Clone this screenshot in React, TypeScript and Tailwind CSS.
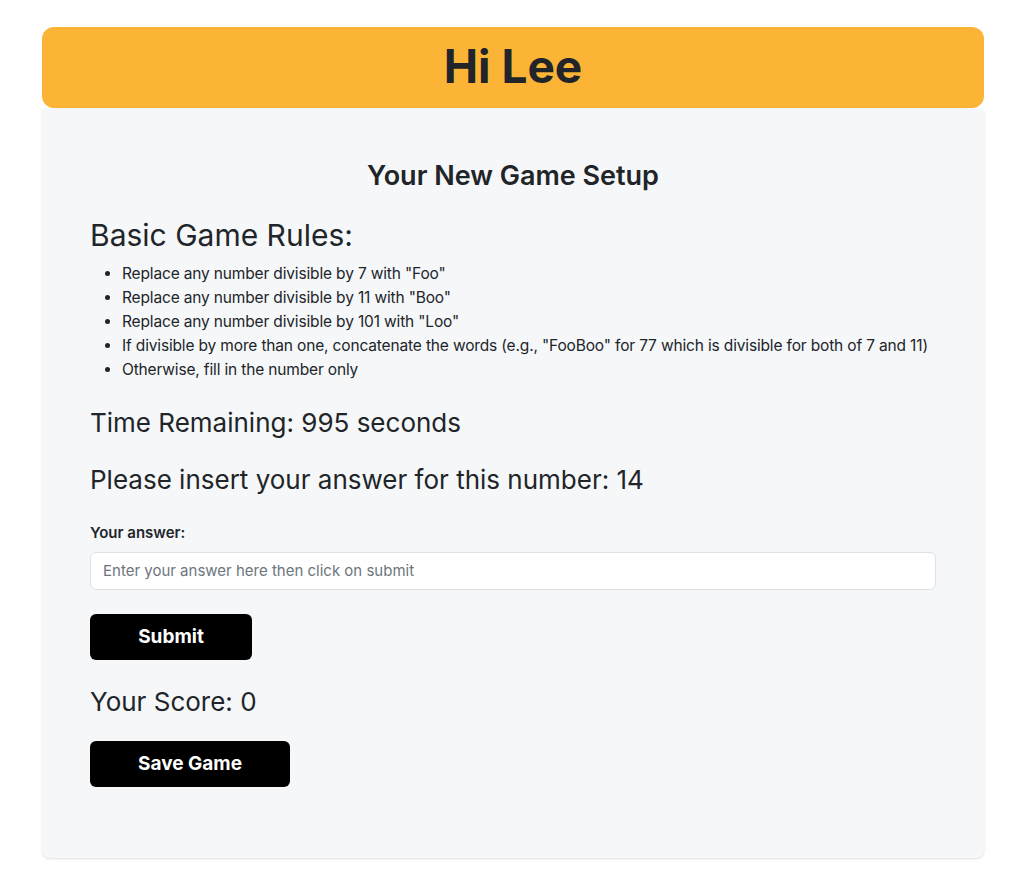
import React, { useState } from "react";

const rules = [
  'Replace any number divisible by 7 with "Foo"',
  'Replace any number divisible by 11 with "Boo"',
  'Replace any number divisible by 101 with "Loo"',
  'If divisible by more than one, concatenate the words (e.g., "FooBoo" for 77 which is divisible for both of 7 and 11)',
  "Otherwise, fill in the number only",
];

const App = () => {
  const [answer, setAnswer] = useState("");

  return (
    <div
      className="min-h-screen bg-white pl-[42px] pr-[37px] pt-[27px] pb-5 text-[#212529]"
      style={{ fontFamily: "Inter, 'Noto Sans', sans-serif" }}
    >
      <div className="flex h-[81px] items-center justify-center rounded-xl bg-[#fbb436] pb-1">
        <h1 className="text-[46px] font-bold leading-none">Hi Lee</h1>
      </div>
      <div className="rounded-b-lg rounded-t-sm bg-[#f6f7f9] px-12 pt-[52px] pb-[71px] shadow-sm">
        <h2 className="text-center text-[27px] font-semibold leading-[1.2]">Your New Game Setup</h2>
        <h3 className="mt-[25px] text-[30px] leading-[1.2]">Basic Game Rules:</h3>
        <ul className="mt-[9px] list-disc pl-8 text-[15.5px] leading-6">
          {rules.map((r) => (
            <li key={r} className="whitespace-nowrap tracking-[-0.01em]">
              {r}
            </li>
          ))}
        </ul>
        <h4 className="mt-[25px] text-[26px] leading-[1.2]">Time Remaining: 995 seconds</h4>
        <h4 className="mt-[25px] text-[26px] leading-[1.2]">
          Please insert your answer for this number: 14
        </h4>
        <form
          onSubmit={(e) => {
            e.preventDefault();
          }}
        >
          <label htmlFor="answer" className="mt-[27px] block text-[15px] font-semibold leading-[21px]">
            Your answer:
          </label>
          <input
            id="answer"
            type="text"
            value={answer}
            onChange={(e) => setAnswer(e.target.value)}
            placeholder="Enter your answer here then click on submit"
            className="mt-[9px] block h-[38px] w-full rounded-md border border-[#dee2e6] bg-white px-3 text-[15px] placeholder:text-[#6c757d] focus:outline-none"
          />
          <button
            type="submit"
            className="mt-6 h-[46px] w-[162px] rounded-md bg-black text-[19px] font-bold text-white"
          >
            Submit
          </button>
        </form>
        <h4 className="mt-[26px] text-[26px] leading-[1.2]">Your Score: 0</h4>
        <button className="mt-6 h-[46px] w-[200px] rounded-md bg-black text-[19px] font-bold text-white">
          Save Game
        </button>
      </div>
    </div>
  );
};

export default App;
